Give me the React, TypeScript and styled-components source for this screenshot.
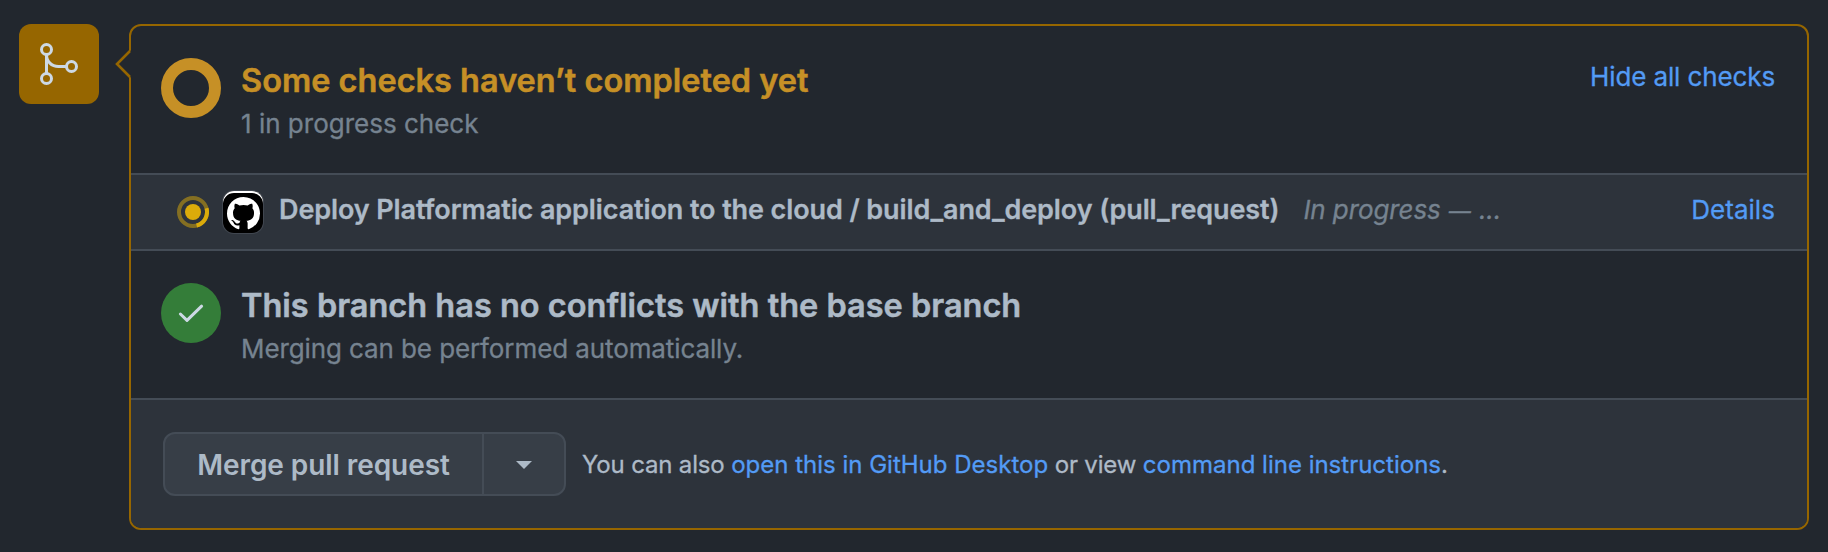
import React from 'react';
import styled, { createGlobalStyle } from 'styled-components';

const color = {
  canvas: '#22272e',
  subtle: '#2d333b',
  border: '#444c56',
  attention: '#966600',
  attentionText: '#c69026',
  success: '#347d39',
  text: '#adbac7',
  muted: '#768390',
  link: '#539bf5',
  onEmphasis: '#cdd9e5',
  button: '#373e47',
  pending: '#dbab0a',
};

const GlobalStyle = createGlobalStyle`
  * { box-sizing: border-box; }
  body {
    margin: 0;
    background: ${color.canvas};
    color: ${color.text};
    font-family: Inter, "Liberation Sans", sans-serif;
    -webkit-text-stroke: 0.3px;
  }
`;

const Page = styled.main`
  display: flex;
  align-items: flex-start;
  gap: 30px;
  height: 552px;
  padding: 24px 19px 22px;
`;

const StateBadge = styled.div`
  flex: none;
  display: grid;
  place-items: center;
  width: 80px;
  height: 80px;
  border-radius: 12px;
  background: ${color.attention};
`;

const Panel = styled.section`
  position: relative;
  flex: 1;
  min-width: 0;
  height: 506px;
  border: 2px solid ${color.attention};
  border-radius: 12px;
`;

const Pointer = styled.svg`
  position: absolute;
  left: -18px;
  top: 20px;
`;

const StatusSection = styled.div`
  display: flex;
  align-items: flex-start;
  height: 149px;
  padding: 32px 32px 0 30px;
  border-bottom: 2px solid ${color.border};
`;

const StatusIcon = styled.svg`
  flex: none;
  margin-right: 20px;
`;

const StatusText = styled.div`
  flex: 1;
`;

const Title = styled.h3<{ $tone?: string }>`
  margin: 0;
  font-size: 32.5px;
  font-weight: 600;
  line-height: 46px;
  color: ${(p) => p.$tone ?? color.text};
  -webkit-text-stroke: 0.5px;
`;

const Subtitle = styled.p<{ $spacing?: number }>`
  margin: 0;
  font-size: 26px;
  line-height: 39px;
  letter-spacing: ${(p) => p.$spacing ?? 0}px;
  color: ${color.muted};
`;

const Link = styled.a<{ $size?: number; $spacing?: number }>`
  color: ${color.link};
  text-decoration: none;
  font-size: ${(p) => p.$size ?? 26}px;
  line-height: 37px;
  letter-spacing: ${(p) => p.$spacing ?? 0}px;
`;

const CheckRow = styled.div`
  display: flex;
  align-items: center;
  height: 76px;
  padding: 0 32px 0 46px;
  background: ${color.subtle};
  border-bottom: 2px solid ${color.border};
`;

const AppAvatar = styled.div`
  flex: none;
  display: grid;
  place-items: center;
  width: 40px;
  height: 42px;
  margin: 0 16px 0 14px;
  padding-top: 2px;
  border-radius: 11px;
  background: #000;
  box-shadow: inset 0 2px 0 #fff, 0 0 0 1px rgba(205, 217, 229, 0.12);
`;

const CheckLabel = styled.div`
  flex: 1;
  padding-bottom: 4px;
  font-size: 27px;
  line-height: 36px;
  white-space: nowrap;
`;

const CheckName = styled.strong`
  font-weight: 600;
  letter-spacing: -0.1px;
`;

const CheckState = styled.em`
  margin-left: 24px;
  font-size: 26px;
  color: ${color.muted};
  letter-spacing: -0.1px;
`;

const Dash = styled.span`
  font-size: 22px;
  margin: 0 1px;
`;

const DetailsLink = styled(Link)`
  padding-bottom: 6px;
`;

const Footer = styled.div`
  display: flex;
  align-items: center;
  height: 128px;
  padding: 0 32px;
  background: ${color.subtle};
  border-radius: 0 0 10px 10px;
`;

const ButtonGroup = styled.div`
  flex: none;
  display: flex;
  width: 403px;
  height: 64px;
  margin-right: 16px;
  border: 2px solid ${color.border};
  border-radius: 12px;
  background: ${color.button};
  overflow: hidden;
`;

const GroupButton = styled.button<{ $width: number; $divided?: boolean }>`
  display: flex;
  align-items: center;
  justify-content: center;
  width: ${(p) => p.$width}px;
  padding: 2px 0 0;
  border: 0;
  border-right: ${(p) => (p.$divided ? `2px solid ${color.border}` : '0')};
  background: none;
  color: ${color.text};
  font: 600 28px Inter, "Liberation Sans", sans-serif;
  letter-spacing: -0.07px;
  white-space: nowrap;
  -webkit-text-stroke: 0;
`;

const Hint = styled.p`
  margin: 0;
  font-size: 24px;
  line-height: 36px;
  letter-spacing: -0.16px;
  white-space: nowrap;
`;

const MergeIcon = () => (
  <svg width="48" height="48" viewBox="0 0 48 48" fill="none" stroke={color.onEmphasis} strokeWidth="3">
    <circle cx="11.5" cy="9.5" r="5" />
    <circle cx="11.5" cy="38.5" r="5" />
    <circle cx="36.5" cy="26.5" r="5" />
    <path d="M11.5 14.5v19M11.5 14.5c0 7 5 12 12 12h8" />
  </svg>
);

const PendingDot = () => (
  <svg width="32" height="32" viewBox="0 0 32 32" fill="none">
    <circle cx="16" cy="16" r="8" fill={color.pending} />
    <circle cx="16" cy="16" r="14" stroke={color.pending} strokeOpacity="0.5" strokeWidth="4" />
    <path d="M29.5 12.2A14 14 0 0 1 19.6 29.5" stroke={color.pending} strokeWidth="4" />
  </svg>
);

const GitHubMark = () => (
  <svg width="33" height="33" viewBox="0 0 16 16" fill="#fff">
    <path d="M8 0C3.58 0 0 3.58 0 8c0 3.54 2.29 6.53 5.47 7.59.4.07.55-.17.55-.38 0-.19-.01-.82-.01-1.49-2.01.37-2.53-.49-2.69-.94-.09-.23-.48-.94-.82-1.13-.28-.15-.68-.52-.01-.53.63-.01 1.08.58 1.23.82.72 1.21 1.87.87 2.33.66.07-.52.28-.87.51-1.07-1.78-.2-3.64-.89-3.64-3.95 0-.87.31-1.59.82-2.15-.08-.2-.36-1.02.08-2.12 0 0 .67-.21 2.2.82.64-.18 1.32-.27 2-.27.68 0 1.36.09 2 .27 1.53-1.04 2.2-.82 2.2-.82.44 1.1.16 1.92.08 2.12.51.56.82 1.27.82 2.15 0 3.07-1.87 3.75-3.65 3.95.29.25.54.73.54 1.48 0 1.07-.01 1.93-.01 2.2 0 .21.15.46.55.38A8.013 8.013 0 0016 8c0-4.42-3.58-8-8-8z" />
  </svg>
);

export default function App() {
  return (
    <>
      <GlobalStyle />
      <Page>
        <StateBadge>
          <MergeIcon />
        </StateBadge>
        <Panel>
          <Pointer width="20" height="36" viewBox="0 0 20 36">
            <path d="M20 3.5L17 5L4 18L17 31L20 32.5Z" fill={color.canvas} />
            <path d="M17 5L4 18L17 31" fill="none" stroke={color.attention} strokeWidth="2.6" />
          </Pointer>

          <StatusSection>
            <StatusIcon width="60" height="60" viewBox="0 0 60 60">
              <circle cx="30" cy="30" r="24" fill="none" stroke={color.attentionText} strokeWidth="12" />
            </StatusIcon>
            <StatusText>
              <Title $tone={color.attentionText}>Some checks haven’t completed yet</Title>
              <Subtitle>1 in progress check</Subtitle>
            </StatusText>
            <Link $spacing={-0.12}>Hide all checks</Link>
          </StatusSection>

          <CheckRow>
            <PendingDot />
            <AppAvatar>
              <GitHubMark />
            </AppAvatar>
            <CheckLabel>
              <CheckName>Deploy Platformatic application to the cloud / build_and_deploy (pull_request)</CheckName>
              <CheckState>
                In progress <Dash>—</Dash> ...
              </CheckState>
            </CheckLabel>
            <DetailsLink $spacing={0.05}>Details</DetailsLink>
          </CheckRow>

          <StatusSection>
            <StatusIcon width="60" height="60" viewBox="0 0 60 60">
              <circle cx="30" cy="30" r="30" fill={color.success} />
              <path
                d="M19.4 31L26 37.4L40.6 23.2"
                fill="none"
                stroke={color.onEmphasis}
                strokeWidth="3"
                strokeLinecap="round"
                strokeLinejoin="round"
              />
            </StatusIcon>
            <StatusText>
              <Title>This branch has no conflicts with the base branch</Title>
              <Subtitle $spacing={-0.1}>Merging can be performed automatically.</Subtitle>
            </StatusText>
          </StatusSection>

          <Footer>
            <ButtonGroup>
              <GroupButton $width={319} $divided>
                Merge pull request
              </GroupButton>
              <GroupButton $width={80} aria-label="Select merge method">
                <svg width="16" height="8" viewBox="0 0 16 8" fill={color.text}>
                  <path d="M0 0h16L8 8z" />
                </svg>
              </GroupButton>
            </ButtonGroup>
            <Hint>
              You can also <Link $size={24}>open this in GitHub Desktop</Link> or view{' '}
              <Link $size={24}>command line instructions</Link>.
            </Hint>
          </Footer>
        </Panel>
      </Page>
    </>
  );
}
